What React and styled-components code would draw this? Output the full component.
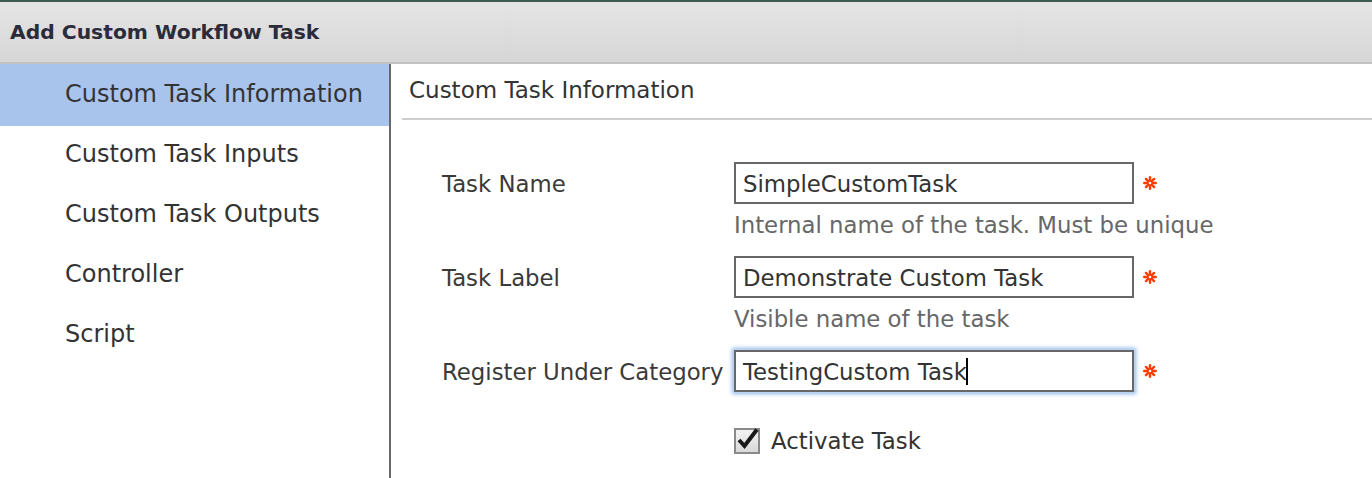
import React from "react";
import styled, { createGlobalStyle } from "styled-components";

const Global = createGlobalStyle`
  html, body { margin: 0; padding: 0; background: #fff; }
  body { font-family: "DejaVu Sans", Verdana, sans-serif; color: #333; }
`;

const Page = styled.div`
  width: 1372px;
  height: 478px;
  overflow: hidden;
  border-top: 2px solid #3c5b4f;
  box-sizing: border-box;
  display: flex;
  flex-direction: column;
`;

const Header = styled.div`
  height: 60px;
  flex: 0 0 auto;
  background: linear-gradient(#e5e5e5, #d6d6d6);
  border-top: 1px solid #efefef;
  border-bottom: 2px solid #c2c2c2;
  box-sizing: content-box;
  margin-top: -1px;
  display: flex;
  align-items: center;
  padding-left: 10px;
  font-weight: bold;
  font-size: 20.3px;
  color: #2b2b3a;
`;

const Body = styled.div`
  flex: 1;
  display: flex;
`;

const Sidebar = styled.nav`
  width: 389px;
  flex: 0 0 auto;
  border-right: 2px solid #686868;
  display: flex;
  flex-direction: column;
`;

const NavItem = styled.div`
  height: ${(p) => (p.$active ? 62 : 60)}px;
  margin-bottom: ${(p) => (p.$active ? -2 : 0)}px;
  padding-left: 65px;
  display: flex;
  align-items: center;
  font-size: 24px;
  color: #333;
  background: ${(p) => (p.$active ? "#a8c4ed" : "transparent")};
  padding-bottom: ${(p) => (p.$active ? 3 : 1)}px;
  box-sizing: border-box;
`;

const Panel = styled.section`
  flex: 1;
  padding-left: 11px;
  display: flex;
  flex-direction: column;
`;

const PanelTitle = styled.div`
  height: 56px;
  padding-left: 7px;
  display: flex;
  align-items: center;
  font-size: 23px;
  color: #333;
  border-bottom: 2px solid #cdcdcd;
  padding-bottom: 2px;
  box-sizing: border-box;
`;

const Form = styled.div`
  padding-top: 42px;
  padding-left: 40px;
  display: grid;
  grid-template-columns: 292px auto;
  align-items: start;
`;

const Label = styled.div`
  height: 42px;
  display: flex;
  align-items: center;
  font-size: 22.8px;
  color: #3a3a3a;
  white-space: nowrap;
  padding-top: 2px;
  box-sizing: border-box;
`;

const FieldCol = styled.div`
  display: flex;
  flex-direction: column;
  margin-bottom: ${(p) => p.$gap}px;
`;

const FieldRow = styled.div`
  display: flex;
  align-items: center;
`;

const Field = styled.div`
  width: 400px;
  height: 42px;
  box-sizing: border-box;
  border: 2px solid #676767;
  padding-left: 7px;
  padding-top: 1px;
  display: flex;
  align-items: center;
  font-size: 22.8px;
  color: #333;
  background: #fff;
  box-shadow: ${(p) => (p.$focus ? "0 0 0 1px #b9d3f3, 0 0 4px 2px #8fb8ec" : "none")};
`;

const Caret = styled.span`
  display: inline-block;
  width: 2px;
  height: 27px;
  background: #000;
  margin-left: -1px;
`;

const Required = styled.svg`
  margin-left: 9px;
  width: 14px;
  height: 14px;
`;

const Help = styled.div`
  height: 40px;
  display: flex;
  align-items: center;
  padding-top: 2px;
  box-sizing: border-box;
  font-size: 22.8px;
  color: #676767;
`;

const CheckRow = styled.label`
  grid-column: 2;
  display: flex;
  align-items: center;
  gap: 10px;
  font-size: 22.8px;
  color: #333;
`;

const Box = styled.svg`
  width: 27px;
  height: 27px;
`;

const Asterisk = () => (
  <Required viewBox="0 0 14 14">
    <g stroke="#ff3b00" strokeWidth="2.4" strokeLinecap="round">
      <line x1="7" y1="1.2" x2="7" y2="12.8" />
      <line x1="1.2" y1="7" x2="12.8" y2="7" />
      <line x1="2.9" y1="2.9" x2="11.1" y2="11.1" />
      <line x1="11.1" y1="2.9" x2="2.9" y2="11.1" />
    </g>
    <circle cx="7" cy="7" r="1.3" fill="#fff" />
  </Required>
);

const Checkbox = () => (
  <Box viewBox="0 0 27 27">
    <defs>
      <linearGradient id="cbg" x1="0" y1="0" x2="0" y2="1">
        <stop offset="0" stopColor="#f4f4f4" />
        <stop offset="1" stopColor="#d8d8d8" />
      </linearGradient>
    </defs>
    <rect x="1" y="2" width="24" height="24" fill="url(#cbg)" stroke="#8a8a8a" strokeWidth="2" />
    <path d="M5 13 L10.5 19 L23 2.5" fill="none" stroke="#1a1a1a" strokeWidth="4" strokeLinejoin="miter" />
  </Box>
);

const navItems = [
  "Custom Task Information",
  "Custom Task Inputs",
  "Custom Task Outputs",
  "Controller",
  "Script",
];

export default function App() {
  return (
    <>
      <Global />
      <Page>
        <Header>Add Custom Workflow Task</Header>
        <Body>
          <Sidebar>
            {navItems.map((t, i) => (
              <NavItem key={t} $active={i === 0}>
                {t}
              </NavItem>
            ))}
          </Sidebar>
          <Panel>
            <PanelTitle>Custom Task Information</PanelTitle>
            <Form>
              <Label>Task Name</Label>
              <FieldCol $gap={12}>
                <FieldRow>
                  <Field>SimpleCustomTask</Field>
                  <Asterisk />
                </FieldRow>
                <Help>Internal name of the task. Must be unique</Help>
              </FieldCol>

              <Label>Task Label</Label>
              <FieldCol $gap={12}>
                <FieldRow>
                  <Field>Demonstrate Custom Task</Field>
                  <Asterisk />
                </FieldRow>
                <Help>Visible name of the task</Help>
              </FieldCol>

              <Label>Register Under Category</Label>
              <FieldCol $gap={35}>
                <FieldRow>
                  <Field $focus>
                    TestingCustom Task
                    <Caret />
                  </Field>
                  <Asterisk />
                </FieldRow>
              </FieldCol>

              <CheckRow>
                <Checkbox />
                Activate Task
              </CheckRow>
            </Form>
          </Panel>
        </Body>
      </Page>
    </>
  );
}
